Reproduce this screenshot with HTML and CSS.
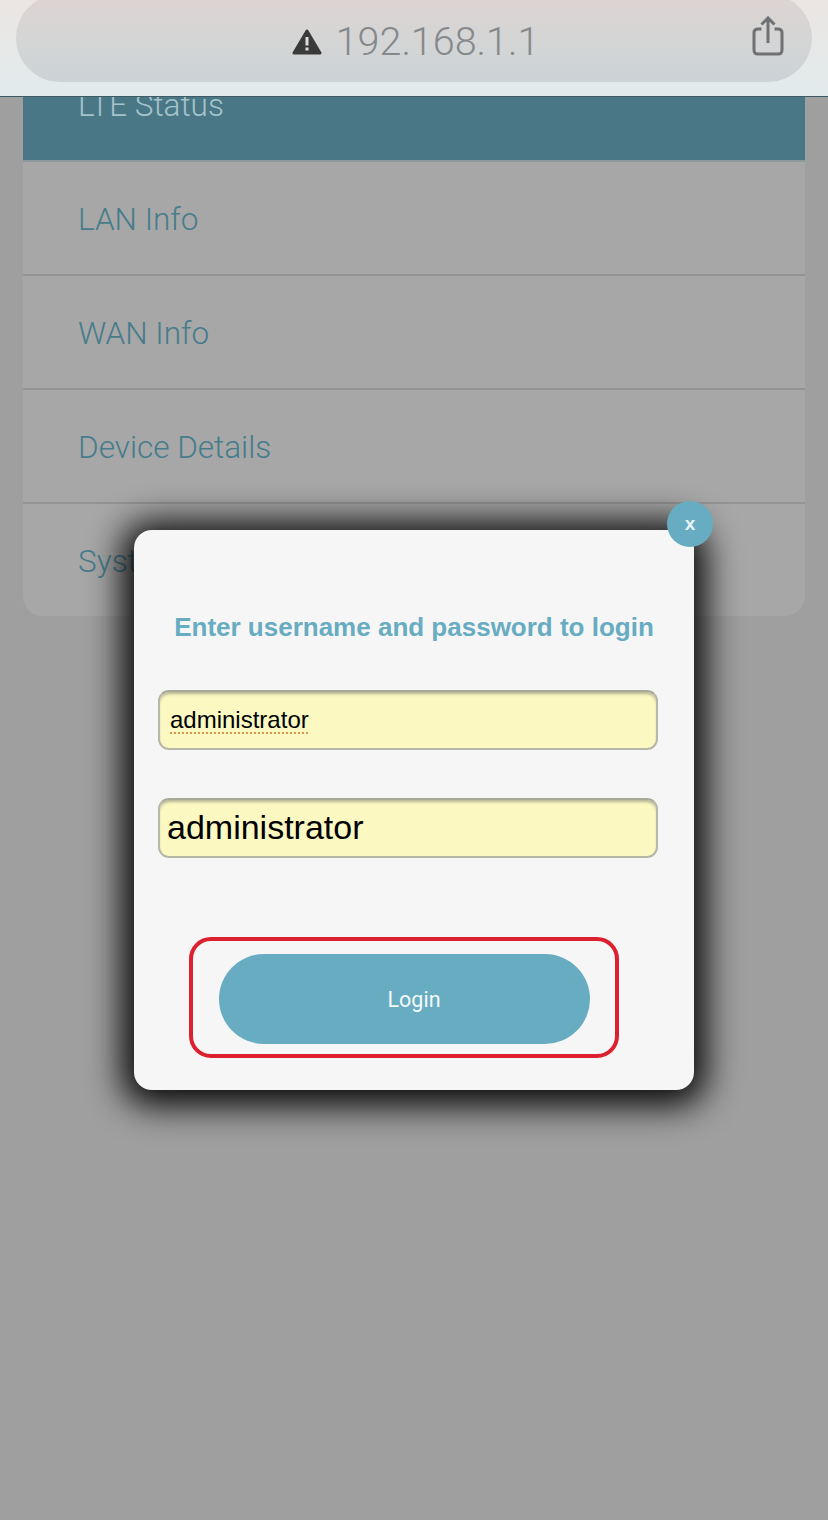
FILE: index.html
```html
<!DOCTYPE html>
<html lang="en">
<head>
    <meta charset="UTF-8">
    <meta name="viewport" content="width=device-width, initial-scale=1.0">
    <title>Login</title>
    <link rel="stylesheet" href="styles.css">
</head>
<body>
    <div class="browser-bar">
        <div class="address-pill">
            <svg class="warn-icon" viewBox="0 0 30 26" width="30" height="26">
                <path d="M15 2 L28 24 H2 Z" fill="#3a3a3a" stroke="#3a3a3a" stroke-width="3" stroke-linejoin="round"/>
                <rect x="13.5" y="8" width="3" height="8.5" fill="#dcdcdc"/>
                <rect x="13.5" y="18.5" width="3" height="3" fill="#dcdcdc"/>
            </svg>
            <span class="address">192.168.1.1</span>
            <svg class="share-icon" viewBox="0 0 32 40" width="32" height="40">
                <path d="M9.5 13 H6 Q2 13 2 17 V34 Q2 38 6 38 H26 Q30 38 30 34 V17 Q30 13 26 13 H22.5" fill="none" stroke="#6f7173" stroke-width="3"/>
                <path d="M16 27 V2 M9.5 8.5 L16 2 L22.5 8.5" fill="none" stroke="#6f7173" stroke-width="3"/>
            </svg>
        </div>
    </div>

    <div class="menu">
        <div class="menu-item active">LTE Status</div>
        <div class="menu-item">LAN Info</div>
        <div class="menu-item">WAN Info</div>
        <div class="menu-item">Device Details</div>
        <div class="menu-item">System</div>
    </div>

    <div class="modal">
        <div class="close-button">x</div>
        <h2 class="modal-title">Enter username and password to login</h2>
        <div class="field"><span class="misspelled">administrator</span></div>
        <div class="field field-large">administrator</div>
        <div class="highlight">
            <button class="login-button">Login</button>
        </div>
    </div>
</body>
</html>
```

FILE: styles.css
```css
html, body {
    height: 100%;
}
body {
    margin: 0;
    height: 1520px;
    overflow: hidden;
    position: relative;
    background-color: #9f9f9f;
    font-family: "Liberation Sans", Arial, sans-serif;
}

/* browser address bar */
.browser-bar {
    position: relative;
    z-index: 2;
    height: 97px;
    box-sizing: border-box;
    padding: 0 16px;
    background: linear-gradient(to bottom, #ebe6e4, #e2ebec);
    border-bottom: 1px solid #3e5a62;
    overflow: hidden;
}
.address-pill {
    position: relative;
    height: 88px;
    margin-top: -6px;
    padding-left: 3px;
    border-radius: 44px;
    background: linear-gradient(to bottom, #dcd4d2, #d5d5d5 50%, #ccd3d6);
    display: flex;
    align-items: center;
    justify-content: center;
    gap: 14px;
    box-sizing: border-box;
}
.warn-icon {
    margin-top: 7px;
}
.address {
    font-family: Roboto, "Liberation Sans", sans-serif;
    font-weight: 300;
    font-size: 39.5px;
    line-height: 50px;
    margin-top: 7px;
    color: #85898b;
}
.share-icon {
    position: absolute;
    right: 28px;
    top: 22px;
}

/* menu behind the dialog */
.menu {
    margin: -49px 23px 0;
    background-color: #a7a7a7;
    border-radius: 0 0 20px 20px;
}
.menu-item {
    height: 114px;
    box-sizing: border-box;
    padding-left: 55px;
    font-family: Roboto, "Liberation Sans", sans-serif;
    font-weight: 300;
    font-size: 31.5px;
    line-height: 116px;
    color: #467c8c;
    border-bottom: 2px solid #939393;
}
.menu-item:last-child {
    height: 112px;
    border-bottom: none;
}
.menu-item.active {
    background-color: #497785;
    color: #a5c3cb;
    border-bottom-color: #8c9a9e;
}

/* login dialog */
.modal {
    position: absolute;
    left: 134px;
    top: 530px;
    width: 560px;
    height: 560px;
    box-sizing: border-box;
    padding: 80px 36px 0 24px;
    background-color: #f6f6f7;
    border-radius: 18px;
    box-shadow: 0 4px 34px 12px rgba(0, 0, 0, 0.95);
}
.close-button {
    position: absolute;
    top: -29px;
    right: -19px;
    width: 46px;
    height: 46px;
    border-radius: 50%;
    background-color: #68acc2;
    color: #e8f3f6;
    font-size: 19px;
    font-weight: bold;
    line-height: 46px;
    text-align: center;
}
.modal-title {
    margin: 0 -12px 46px 0;
    font-size: 26px;
    line-height: 34px;
    font-weight: bold;
    color: #68acc2;
    text-align: center;
}
.field {
    height: 60px;
    box-sizing: border-box;
    padding-left: 10px;
    margin-bottom: 48px;
    background-color: #fbf8c2;
    border: 2px solid #b7b7a8;
    border-top-color: #a9a99a;
    border-radius: 11px;
    box-shadow: inset 0 3px 3px -1px #b5b394;
    font-size: 24px;
    line-height: 56px;
    color: #000;
}
.misspelled {
    text-decoration: underline dotted #e0924a 2px;
    text-underline-offset: 4px;
}
.field-large {
    padding-left: 7px;
    font-size: 34px;
    line-height: 54px;
}
.highlight {
    width: 430px;
    height: 121px;
    box-sizing: border-box;
    margin: 79px 0 0 31px;
    padding: 13px 25px 10px 26px;
    border: 4px solid #dd2030;
    border-radius: 22px;
}
.login-button {
    display: block;
    width: 100%;
    height: 90px;
    padding: 0 0 0 19px;
    border: none;
    border-radius: 45px;
    background-color: #68acc2;
    color: #f2fafb;
    font-family: Roboto, Arial, sans-serif;
    font-size: 21.5px;
}
```
